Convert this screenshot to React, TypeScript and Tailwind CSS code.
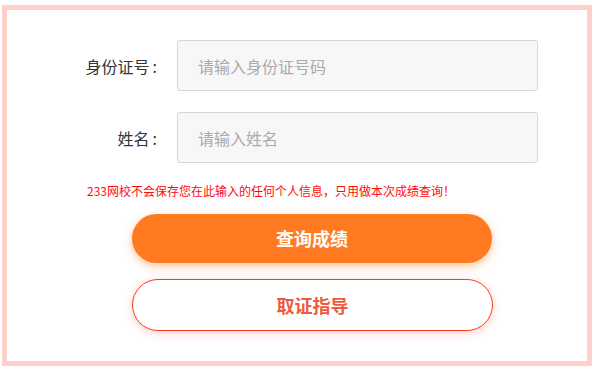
import React from "react";

const font = { fontFamily: '"Noto Sans CJK SC", "Noto Sans", sans-serif' };

export default function App() {
  return (
    <div className="w-[596px] h-[369px] bg-white overflow-hidden" style={font}>
      <div className="ml-[2px] mt-[5px] w-[590px] h-[361px] border-[5px] border-[#ffd0cb] bg-white">
        <div className="flex flex-col pt-[30px]">
          <div className="flex items-center">
            <label className="w-[150px] text-right text-[16px] text-[#333] leading-none">
              身份证号<span className="ml-[3px]">:</span>
            </label>
            <input
              className="ml-[20px] w-[361px] h-[51px] rounded-[3px] border border-[#d6d6d6] bg-[#f7f7f7] px-[20px] text-[16px] text-[#333] placeholder:text-[#aaaaaa] outline-none"
              placeholder="请输入身份证号码"
            />
          </div>
          <div className="flex items-center mt-[21px]">
            <label className="w-[150px] text-right text-[16px] text-[#333] leading-none">
              姓名<span className="ml-[3px]">:</span>
            </label>
            <input
              className="ml-[20px] w-[361px] h-[51px] rounded-[3px] border border-[#d6d6d6] bg-[#f7f7f7] px-[20px] text-[16px] text-[#333] placeholder:text-[#aaaaaa] outline-none"
              placeholder="请输入姓名"
            />
          </div>
          <p className="mt-[21px] pl-[80px] text-[12px] leading-[14px] text-[#ff0a0a]">
            233网校不会保存您在此输入的任何个人信息，只用做本次成绩查询！
          </p>
          <button className="ml-[125px] mt-[16px] w-[360px] h-[49px] rounded-full bg-[#ff7a21] text-white text-[18px] font-bold shadow-[0_3px_10px_rgba(255,122,33,0.45)]">
            查询成绩
          </button>
          <button className="ml-[125px] mt-[16px] w-[361px] h-[52px] rounded-full border border-[#f5401f] bg-white text-[#ee5a3e] text-[18px] font-bold shadow-[0_2px_8px_rgba(245,64,31,0.25)]">
            取证指导
          </button>
        </div>
      </div>
    </div>
  );
}
